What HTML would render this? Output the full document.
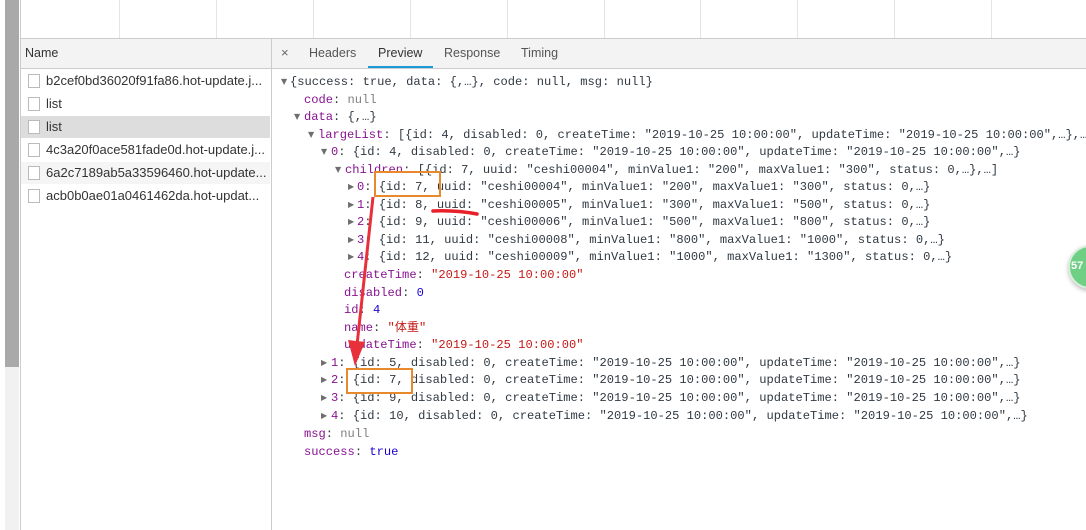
<!DOCTYPE html>
<html><head><meta charset="utf-8"><style>
*{margin:0;padding:0;box-sizing:border-box}
body{width:1086px;height:530px;overflow:hidden;background:#fff;position:relative;font-family:"Liberation Sans","Noto Sans CJK SC",sans-serif}
.abs{position:absolute}
.l{position:absolute;font-family:"Liberation Mono","Noto Sans CJK SC",monospace;font-size:12.1px;color:#303942;white-space:pre;line-height:17px}
.k{color:#881391}.s{color:#c41a16}.n{color:#1c00cf}.g{color:#808080}
.t{position:absolute;font-size:8px;color:#6e6e6e;font-family:"DejaVu Sans",sans-serif}
.nm{position:absolute;left:46px;font-size:13px;color:#333}
.cb{position:absolute;left:28px;width:12px;height:14px;border:1px solid #bbb;background:#fff}
</style></head><body>
<div class="abs" style="left:5px;top:0;width:14px;height:530px;background:#f1f1f1"></div>
<div class="abs" style="left:5px;top:0;width:14px;height:367px;background:#a9a9a9"></div>
<div class="abs" style="left:20px;top:0;width:1px;height:530px;background:#ccc"></div>
<div class="abs" style="left:21px;top:38px;width:1065px;height:1px;background:#ccc"></div>
<div class="abs" style="left:119px;top:0;width:1px;height:38px;background:#e4e4e4"></div>
<div class="abs" style="left:216px;top:0;width:1px;height:38px;background:#e4e4e4"></div>
<div class="abs" style="left:313px;top:0;width:1px;height:38px;background:#e4e4e4"></div>
<div class="abs" style="left:410px;top:0;width:1px;height:38px;background:#e4e4e4"></div>
<div class="abs" style="left:507px;top:0;width:1px;height:38px;background:#e4e4e4"></div>
<div class="abs" style="left:604px;top:0;width:1px;height:38px;background:#e4e4e4"></div>
<div class="abs" style="left:700px;top:0;width:1px;height:38px;background:#e4e4e4"></div>
<div class="abs" style="left:797px;top:0;width:1px;height:38px;background:#e4e4e4"></div>
<div class="abs" style="left:894px;top:0;width:1px;height:38px;background:#e4e4e4"></div>
<div class="abs" style="left:991px;top:0;width:1px;height:38px;background:#e4e4e4"></div>
<div class="abs" style="left:21px;top:39px;width:1065px;height:30px;background:#f3f3f3;border-bottom:1px solid #ccc"></div>
<div class="abs" style="left:271px;top:39px;width:1px;height:491px;background:#ccc"></div>
<div class="abs" style="left:25px;top:46px;font-size:12.5px;color:#333">Name</div>
<div class="abs" style="left:281px;top:45px;font-size:13px;color:#666">×</div>
<div class="abs" style="left:309px;top:46px;font-size:12.5px;color:#555">Headers</div>
<div class="abs" style="left:378px;top:46px;font-size:12.5px;color:#333">Preview</div>
<div class="abs" style="left:444px;top:46px;font-size:12.5px;color:#555">Response</div>
<div class="abs" style="left:521px;top:46px;font-size:12.5px;color:#555">Timing</div>
<div class="abs" style="left:368px;top:66px;width:65px;height:2px;background:#1a9bd7"></div>
<div class="abs" style="left:21px;top:116px;width:249px;height:22px;background:#ddd"></div>
<div class="abs" style="left:21px;top:162px;width:249px;height:22px;background:#f5f5f5"></div>
<div class="cb" style="top:74px"></div><div class="nm" style="top:73px">b2cef0bd36020f91fa86.hot-update.j...</div>
<div class="cb" style="top:97px"></div><div class="nm" style="top:96px">list</div>
<div class="cb" style="top:120px"></div><div class="nm" style="top:119px">list</div>
<div class="cb" style="top:143px"></div><div class="nm" style="top:142px">4c3a20f0ace581fade0d.hot-update.j...</div>
<div class="cb" style="top:166px"></div><div class="nm" style="top:165px">6a2c7189ab5a33596460.hot-update...</div>
<div class="cb" style="top:189px"></div><div class="nm" style="top:188px">acb0b0ae01a0461462da.hot-updat...</div>
<span class="t" style="left:281px;top:77px">▼</span><div class="l" style="left:290px;top:74px">{success: true, data: {,…}, code: null, msg: null}</div>
<div class="l" style="left:304px;top:92px"><span class="k">code</span>: <span class="g">null</span></div>
<span class="t" style="left:294px;top:112px">▼</span><div class="l" style="left:304px;top:109px"><span class="k">data</span>: {,…}</div>
<span class="t" style="left:308px;top:130px">▼</span><div class="l" style="left:318px;top:127px"><span class="k">largeList</span>: [{id: 4, disabled: 0, createTime: "2019-10-25 10:00:00", updateTime: "2019-10-25 10:00:00",…},…]</div>
<span class="t" style="left:321px;top:147px">▼</span><div class="l" style="left:331px;top:144px"><span class="k">0</span>: {id: 4, disabled: 0, createTime: "2019-10-25 10:00:00", updateTime: "2019-10-25 10:00:00",…}</div>
<span class="t" style="left:335px;top:165px">▼</span><div class="l" style="left:345px;top:162px"><span class="k">children</span>: [{id: 7, uuid: "ceshi00004", minValue1: "200", maxValue1: "300", status: 0,…},…]</div>
<span class="t" style="left:348px;top:182px">▶</span><div class="l" style="left:357px;top:179px"><span class="k">0</span>: {id: 7, uuid: "ceshi00004", minValue1: "200", maxValue1: "300", status: 0,…}</div>
<span class="t" style="left:348px;top:200px">▶</span><div class="l" style="left:357px;top:197px"><span class="k">1</span>: {id: 8, uuid: "ceshi00005", minValue1: "300", maxValue1: "500", status: 0,…}</div>
<span class="t" style="left:348px;top:217px">▶</span><div class="l" style="left:357px;top:214px"><span class="k">2</span>: {id: 9, uuid: "ceshi00006", minValue1: "500", maxValue1: "800", status: 0,…}</div>
<span class="t" style="left:348px;top:235px">▶</span><div class="l" style="left:357px;top:232px"><span class="k">3</span>: {id: 11, uuid: "ceshi00008", minValue1: "800", maxValue1: "1000", status: 0,…}</div>
<span class="t" style="left:348px;top:252px">▶</span><div class="l" style="left:357px;top:249px"><span class="k">4</span>: {id: 12, uuid: "ceshi00009", minValue1: "1000", maxValue1: "1300", status: 0,…}</div>
<div class="l" style="left:344px;top:267px"><span class="k">createTime</span>: <span class="s">"2019-10-25 10:00:00"</span></div>
<div class="l" style="left:344px;top:285px"><span class="k">disabled</span>: <span class="n">0</span></div>
<div class="l" style="left:344px;top:302px"><span class="k">id</span>: <span class="n">4</span></div>
<div class="l" style="left:344px;top:320px"><span class="k">name</span>: <span class="s">"体重"</span></div>
<div class="l" style="left:344px;top:337px"><span class="k">updateTime</span>: <span class="s">"2019-10-25 10:00:00"</span></div>
<span class="t" style="left:321px;top:358px">▶</span><div class="l" style="left:331px;top:355px"><span class="k">1</span>: {id: 5, disabled: 0, createTime: "2019-10-25 10:00:00", updateTime: "2019-10-25 10:00:00",…}</div>
<span class="t" style="left:321px;top:375px">▶</span><div class="l" style="left:331px;top:372px"><span class="k">2</span>: {id: 7, disabled: 0, createTime: "2019-10-25 10:00:00", updateTime: "2019-10-25 10:00:00",…}</div>
<span class="t" style="left:321px;top:393px">▶</span><div class="l" style="left:331px;top:390px"><span class="k">3</span>: {id: 9, disabled: 0, createTime: "2019-10-25 10:00:00", updateTime: "2019-10-25 10:00:00",…}</div>
<span class="t" style="left:321px;top:411px">▶</span><div class="l" style="left:331px;top:408px"><span class="k">4</span>: {id: 10, disabled: 0, createTime: "2019-10-25 10:00:00", updateTime: "2019-10-25 10:00:00",…}</div>
<div class="l" style="left:304px;top:426px"><span class="k">msg</span>: <span class="g">null</span></div>
<div class="l" style="left:304px;top:444px"><span class="k">success</span>: <span class="n">true</span></div>
<div class="abs" style="left:1068px;top:245px;width:44px;height:44px;border-radius:50%;background:#6fcf84;border:2px solid #d8eedb;box-shadow:0 2px 4px rgba(0,0,0,.25)"></div>
<div class="abs" style="left:1071px;top:260px;font-size:11px;font-weight:bold;color:#fff">57</div>
<svg class="abs" style="left:0;top:0" width="1086" height="530">
<rect x="375" y="172" width="65" height="24" fill="none" stroke="#e8892e" stroke-width="2"/>
<rect x="347" y="369" width="65" height="24" fill="none" stroke="#e8892e" stroke-width="2"/>
<path d="M433 211 Q455 210 477 214" fill="none" stroke="#e8202a" stroke-width="3.5" stroke-linecap="round"/>
<line x1="373" y1="197" x2="357" y2="345" stroke="#e8303a" stroke-width="3"/>
<polygon points="348,340 365,342 355,366" fill="#e8303a"/>
</svg>
</body></html>
